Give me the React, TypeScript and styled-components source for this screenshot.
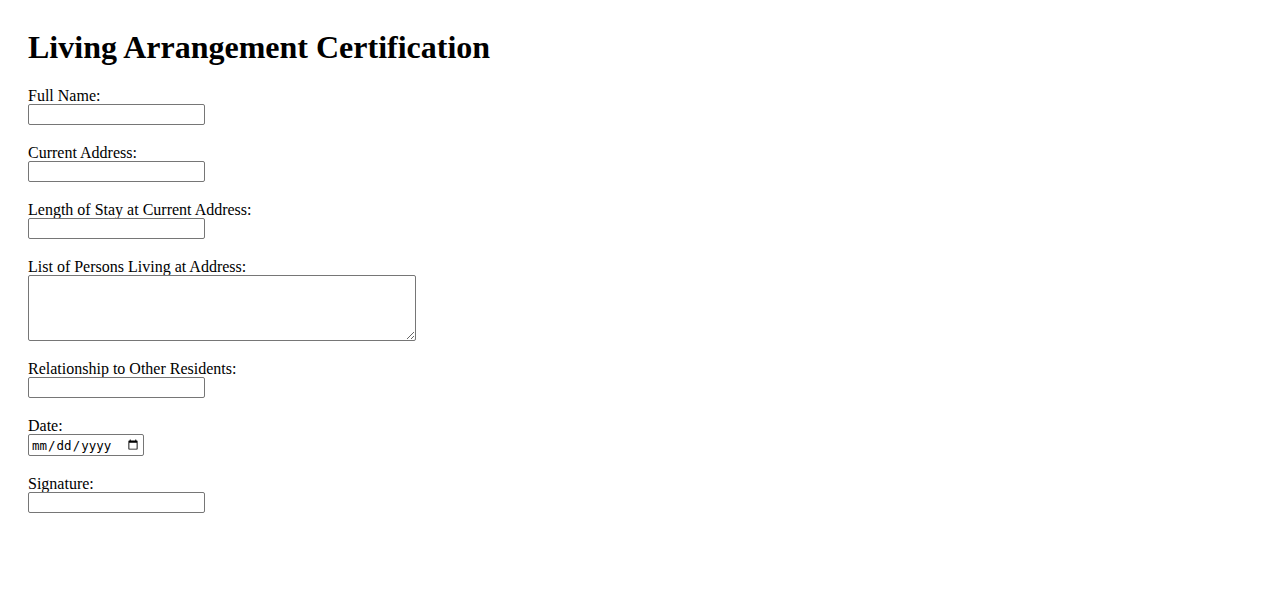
import React from "react";
import styled, { createGlobalStyle } from "styled-components";

const GlobalStyle = createGlobalStyle`
  html, body {
    margin: 0;
    padding: 0;
    background: #ffffff;
  }
  body {
    font-family: "Liberation Serif", "Times New Roman", serif;
    font-size: 16px;
    color: #000000;
  }
`;

const Page = styled.div`
  padding: 28px;
`;

const Title = styled.h1`
  font-family: "Liberation Serif", "Times New Roman", serif;
  font-size: 32px;
  font-weight: bold;
  line-height: 39px;
  height: 37px;
  margin: 0 0 21px 0;
`;

const Form = styled.form`
  display: flex;
  flex-direction: column;
  align-items: flex-start;
`;

const Field = styled.div`
  display: flex;
  flex-direction: column;
  align-items: flex-start;
  margin-bottom: 18px;
`;

const Label = styled.label`
  display: block;
  line-height: 20px;
  height: 18px;
`;

const TextInput = styled.input`
  box-sizing: border-box;
  width: 177px;
  height: 21px;
  margin: 0;
  padding: 1px 2px;
  border: 1px solid #767676;
  border-radius: 2px;
  font-family: Arial, "Liberation Sans", sans-serif;
  font-size: 13.33px;
  background: #fff;
`;

const DateInput = styled.input`
  box-sizing: border-box;
  width: 116px;
  height: 22px;
  margin: 0;
  padding: 1px 2px;
  border: 1px solid #767676;
  border-radius: 2px;
  font-family: "DejaVu Sans Mono", monospace;
  font-size: 12.5px;
  background: #fff;
`;

const TextArea = styled.textarea`
  box-sizing: border-box;
  width: 388px;
  height: 66px;
  margin: 0;
  padding: 2px;
  border: 1px solid #767676;
  border-radius: 2px;
  font-family: "Liberation Mono", monospace;
  font-size: 13.33px;
  background: #fff;
`;

export default function App() {
  return (
    <>
      <GlobalStyle />
      <Page>
        <Title>Living Arrangement Certification</Title>
        <Form onSubmit={(e) => e.preventDefault()}>
          <Field>
            <Label htmlFor="fullName">Full Name:</Label>
            <TextInput id="fullName" type="text" />
          </Field>
          <Field>
            <Label htmlFor="address">Current Address:</Label>
            <TextInput id="address" type="text" />
          </Field>
          <Field>
            <Label htmlFor="stay">Length of Stay at Current Address:</Label>
            <TextInput id="stay" type="text" />
          </Field>
          <Field>
            <Label htmlFor="persons">List of Persons Living at Address:</Label>
            <TextArea id="persons" />
          </Field>
          <Field>
            <Label htmlFor="relationship">Relationship to Other Residents:</Label>
            <TextInput id="relationship" type="text" />
          </Field>
          <Field>
            <Label htmlFor="date">Date:</Label>
            <DateInput id="date" type="date" />
          </Field>
          <Field>
            <Label htmlFor="signature">Signature:</Label>
            <TextInput id="signature" type="text" />
          </Field>
        </Form>
      </Page>
    </>
  );
}
